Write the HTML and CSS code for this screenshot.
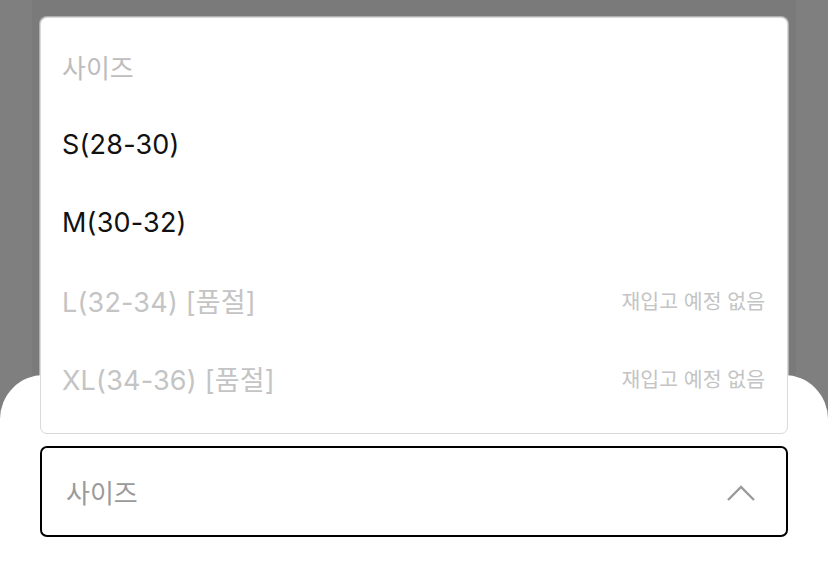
FILE: index.html
```html
<!DOCTYPE html>
<html lang="ko">

<head>
    <meta charset="UTF-8">
    <meta name="viewport" content="width=device-width, initial-scale=1.0">
    <title>사이즈 선택</title>
    <link rel="stylesheet" href="styles.css">
</head>

<body>

    <!-- Dimmed page behind the sheet -->
    <div class="backdrop">
        <div class="backdrop-panel"></div>
    </div>

    <!-- Bottom Sheet -->
    <div class="sheet">
        <div class="select-wrap">

            <!-- Option list (open) -->
            <ul class="option-list">
                <li class="option option-title">사이즈</li>
                <li class="option">S(28-30)</li>
                <li class="option">M(30-32)</li>
                <li class="option sold-out">
                    <span>L(32-34) [품절]</span>
                    <span class="option-note">재입고 예정 없음</span>
                </li>
                <li class="option sold-out">
                    <span>XL(34-36) [품절]</span>
                    <span class="option-note">재입고 예정 없음</span>
                </li>
            </ul>

            <div class="select-box">
                <span class="select-label">사이즈</span>
                <svg class="chevron" width="30" height="20" viewBox="0 0 30 20">
                    <path d="M2 17 L15 4 L28 17" fill="none" stroke="#9a9a9a" stroke-width="2.4"/>
                </svg>
            </div>
        </div>
    </div>

</body>

</html>
```

FILE: styles.css
```css
/* General Styling */
body {
    font-family: Inter, "Noto Sans CJK KR", sans-serif;
    background-color: #7f7f7f;
    margin: 0;
    width: 828px;
    height: 572px;
    overflow: hidden;
    display: flex;
    flex-direction: column;
}

/* Backdrop */
.backdrop {
    height: 375px;
    padding: 0 32px;
    flex-shrink: 0;
}

.backdrop-panel {
    height: 100%;
    background-color: #7a7a7a;
}

/* Bottom Sheet */
.sheet {
    flex: 1;
    background-color: #fff;
    border-radius: 44px 44px 0 0;
    padding: 71px 40px 0;
}

.select-wrap {
    position: relative;
}

/* Option list */
.option-list {
    position: absolute;
    left: 0;
    right: 0;
    bottom: calc(100% + 12px);
    margin: 0;
    padding: 9px 0 16px;
    list-style: none;
    background-color: #fff;
    border: 1px solid #d9d9d9;
    border-radius: 7px;
    box-shadow: 0 0 0 1px rgba(255, 255, 255, 0.4);
}

.option {
    height: 78px;
    display: flex;
    align-items: center;
    justify-content: space-between;
    padding: 0 22px 0 21px;
    font-size: 27px;
    letter-spacing: 0.2px;
    color: #111;
}

.option-title {
    font-size: 26px;
    letter-spacing: 0;
    color: #bdbdbd;
}

.sold-out {
    color: #c4c4c4;
}

.option-note {
    font-size: 20.5px;
    letter-spacing: 0;
    color: #c4c4c4;
}

/* Select box */
.select-box {
    height: 87px;
    border: 2px solid #000;
    border-radius: 7px;
    display: flex;
    align-items: center;
    justify-content: space-between;
    padding: 0 30px 0 24px;
}

.select-label {
    font-size: 26px;
    color: #9a9a9a;
}

.chevron {
    margin-top: 2px;
}
```
